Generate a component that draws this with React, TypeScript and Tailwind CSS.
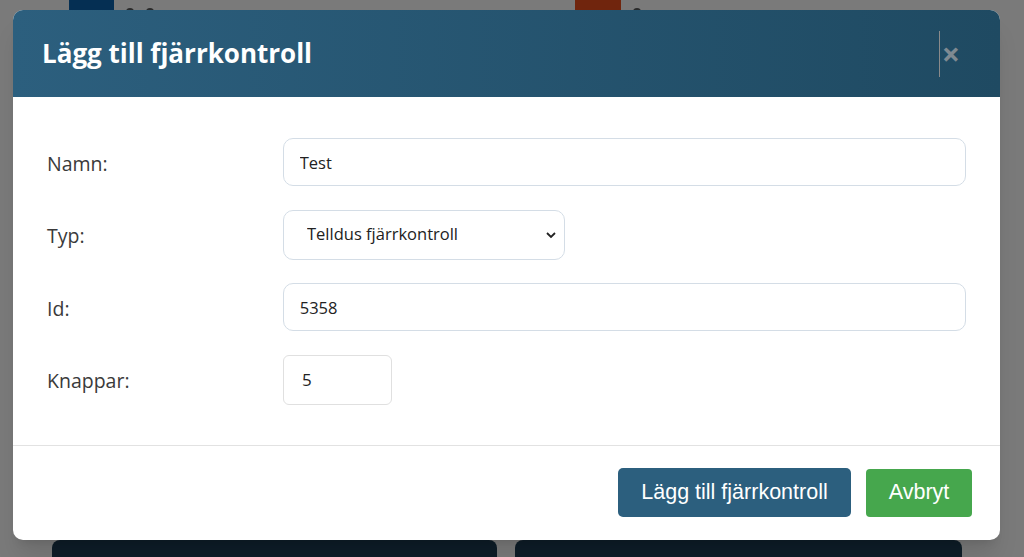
import * as React from "react";

const fields = [
	{ label: "Namn:", value: "Test" },
	{ label: "Id:", value: "5358" },
];

function Field({ label, children }: { label: string; children: React.ReactNode }) {
	return (
		<div className="flex items-center">
			<label className="mt-[3px] w-[236px] text-[19.5px] leading-none text-[#3a3a3a]">{label}</label>
			{children}
		</div>
	);
}

export default function App() {
	const [name, setName] = React.useState(fields[0].value);
	const [id, setId] = React.useState(fields[1].value);
	const [buttons, setButtons] = React.useState("5");

	return (
		<div
			className="relative h-[557px] w-[1024px] overflow-hidden bg-[#f4f4f4]"
			style={{ fontFamily: '"Open Sans", "Noto Sans", sans-serif' }}
		>
			{/* page behind the dialog */}
			<div className="flex pl-[69px]">
				<div className="flex h-[24px] w-[506px] items-start gap-3">
					<div className="h-[22px] w-[45px] bg-[#0b5fa6]" />
					<div className="mt-2 h-2 w-2 rounded-full bg-[#555]" />
					<div className="mt-2 h-2 w-2 rounded-full bg-[#555]" />
				</div>
				<div className="flex h-[24px] items-start gap-3">
					<div className="h-[22px] w-[46px] bg-[#e04a1a]" />
					<div className="mt-2 h-2 w-2 rounded-full bg-[#555]" />
				</div>
			</div>
			<div className="absolute top-[540px] left-[52px] flex gap-[18px]">
				<div className="h-[40px] w-[445px] rounded-t-lg bg-[#1c3a50]" />
				<div className="h-[40px] w-[447px] rounded-t-lg bg-[#1c3a50]" />
			</div>

			<div className="absolute inset-0 bg-black/50" />

			{/* dialog */}
			<div className="absolute top-[10px] left-[13px] w-[987px] overflow-hidden rounded-[10px] bg-white shadow-xl">
				<div className="flex h-[87px] items-center justify-between bg-gradient-to-r from-[#2c5f7e] to-[#1f4a62] pr-[40px] pl-[29px]">
					<h2 className="text-[26px] font-bold text-white">Lägg till fjärrkontroll</h2>
					<div className="flex items-center">
						<div className="h-[46px] w-px bg-[#8a8a8a]" />
						<button className="ml-[2px] text-[32px] leading-none font-bold text-[#7f8a92]">×</button>
					</div>
				</div>

				<div className="flex flex-col gap-[23.5px] px-[34px] pt-[41px] pb-[40px]">
					<Field label="Namn:">
						<input
							value={name}
							onChange={(e) => setName(e.target.value)}
							className="h-[48px] w-[684px] rounded-[10px] border border-[#d4dde6] px-[16px] text-[16.5px] text-[#222] outline-none"
						/>
					</Field>
					<Field label="Typ:">
						<div className="relative">
							<select className="h-[50px] w-[282px] appearance-none rounded-[10px] border border-[#d4dde6] bg-white px-[23px] text-[16.5px] text-[#222] outline-none">
								<option>Telldus fjärrkontroll</option>
							</select>
							<svg
								className="pointer-events-none absolute top-[19px] right-[8px] h-[12px] w-[12px]"
								viewBox="0 0 12 12"
								fill="none"
								stroke="#222"
								strokeWidth="1.8"
							>
								<path d="M2 4l4 4 4-4" />
							</svg>
						</div>
					</Field>
					<Field label="Id:">
						<input
							value={id}
							onChange={(e) => setId(e.target.value)}
							className="h-[48px] w-[684px] rounded-[10px] border border-[#d4dde6] px-[16px] text-[16.5px] text-[#222] outline-none"
						/>
					</Field>
					<Field label="Knappar:">
						<input
							value={buttons}
							onChange={(e) => setButtons(e.target.value)}
							className="h-[50px] w-[109px] rounded-[6px] border border-[#e0e0e0] px-[18px] text-[17px] text-[#222] outline-none"
						/>
					</Field>
				</div>

				<div className="flex h-[95px] items-center justify-end gap-[15px] border-t border-[#e2e2e2] pr-[28px]">
					<button
						className="h-[49px] w-[233px] rounded-[5px] bg-[#2c5f7e] text-[21.5px] text-white"
						style={{ fontFamily: '"Liberation Sans", Arial, sans-serif' }}
					>
						Lägg till fjärrkontroll
					</button>
					<button
						className="h-[48px] w-[106px] rounded-[4px] bg-[#46a74d] text-[21.5px] text-white"
						style={{ fontFamily: '"Liberation Sans", Arial, sans-serif' }}
					>
						Avbryt
					</button>
				</div>
			</div>
		</div>
	);
}
